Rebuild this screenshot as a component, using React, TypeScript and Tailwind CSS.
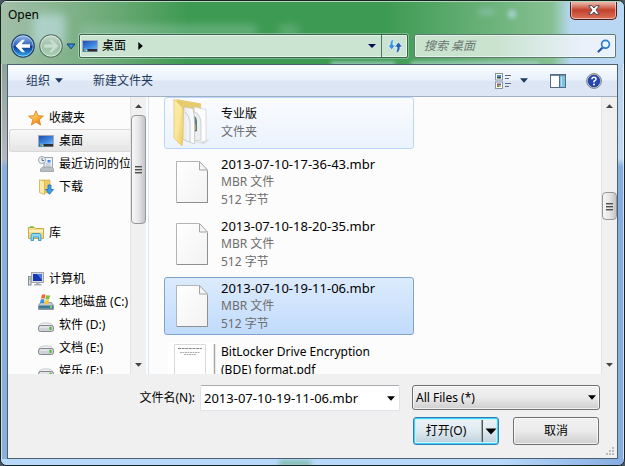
import type { ReactNode } from "react";

type IconProps = { className?: string };

function DesktopIcon() {
  return (
    <svg width="16" height="16" viewBox="0 0 16 16" className="shrink-0" aria-hidden="true">
      <defs>
        <linearGradient id="desk" x1="0" y1="0" x2="1" y2="1">
          <stop offset="0" stopColor="#1c4fae" />
          <stop offset="0.6" stopColor="#3f86e0" />
          <stop offset="1" stopColor="#6fb0f2" />
        </linearGradient>
      </defs>
      <rect x="0.5" y="2.5" width="15" height="11" fill="#c9ced6" stroke="#a3abb8" />
      <rect x="1" y="3" width="14" height="8" fill="url(#desk)" />
      <rect x="1" y="11" width="14" height="2.500" fill="#2a2f38" />
      <circle cx="3.500" cy="12" r="2.200" fill="#3aa3e8" />
      <path d="M2.500 11h1.200v1.200H2.500z" fill="#f3903a" />
      <path d="M4 12h1.200v1.200H4z" fill="#ffe14d" />
    </svg>
  );
}

function StarIcon() {
  return (
    <svg width="16" height="16" viewBox="0 0 16 16" className="shrink-0" aria-hidden="true">
      <defs>
        <linearGradient id="star" x1="0" y1="0" x2="0.600" y2="1">
          <stop offset="0" stopColor="#fff0a0" />
          <stop offset="0.500" stopColor="#fdc14a" />
          <stop offset="1" stopColor="#f07a1a" />
        </linearGradient>
      </defs>
      <path d="M8 .8l2 5 5.400.3-4.200 3.500 1.400 5.400L8 12l-4.600 3 1.400-5.400L.6 6.100 6 5.800z" fill="url(#star)" stroke="#e08a28" strokeLinejoin="round" />
    </svg>
  );
}

function RecentIcon() {
  return (
    <svg width="16" height="16" viewBox="0 0 16 16" className="shrink-0" aria-hidden="true">
      <path d="M6 1.500h8.500v10H6z" fill="#eef1f5" stroke="#9aa2ab" />
      <path d="M2.500 13l2-2h9l2 2v2.500h-13z" fill="#b9bec4" stroke="#979da5" strokeWidth=".8" />
      <path d="M7.500 8h5M7.500 10h5" stroke="#a9b6c4" />
      <rect x="9.500" y="4" width="3" height="2.500" fill="#3d8be0" />
      <circle cx="4" cy="4" r="3.500" fill="#eef3f7" stroke="#98a4b0" />
      <path d="M4 2v2.500h2" fill="none" stroke="#5a6d80" />
    </svg>
  );
}

function DownloadIcon() {
  return (
    <svg width="16" height="16" viewBox="0 0 16 16" className="shrink-0" aria-hidden="true">
      <path d="M4 1h8v13H4z" fill="#ecca66" stroke="#caa53d" strokeWidth=".6" />
      <path d="M1.500.8l5 1.200v13.500l-5-2z" fill="#fbe9a4" stroke="#d2b04f" strokeWidth=".8" />
      <path d="M10 6h3v4.500h2.500L11.500 15.300 7.500 10.500H10z" fill="#3a9eea" stroke="#1b6fc0" strokeWidth=".8" />
    </svg>
  );
}

function LibraryIcon() {
  return (
    <svg width="16" height="16" viewBox="0 0 16 16" className="shrink-0" aria-hidden="true">
      <path d="M.5 13.500V2.500h6l1.500 1h7.500v10z" fill="#f7dd85" stroke="#c9a94b" />
      <path d="M1 5h14v2H1z" fill="#fdf0b8" />
      <path d="M2 2h3.500" stroke="#5fc33c" strokeWidth="1.500" />
      <path d="M3 15.500v-5Q3 8.500 5 8.500h6q2 0 2 2v5h-2.500v-3.500h-5v3.500z" fill="#8fd6f2" stroke="#3b9cc8" />
    </svg>
  );
}

function ComputerIcon() {
  return (
    <svg width="16" height="16" viewBox="0 0 16 16" className="shrink-0" aria-hidden="true">
      <rect x=".5" y="5.500" width="2.500" height="8.500" fill="#d6dbe0" stroke="#868e97" />
      <path d="M1 8h1.500" stroke="#4fbf3a" />
      <rect x="3.500" y="1.500" width="12" height="10" fill="#d7dade" stroke="#9fa6ae" />
      <rect x="5" y="3" width="9" height="7" fill="#1636b4" />
      <path d="M9 3h5v6z" fill="#4a78e4" />
      <path d="M8 11.500h3.500v1.500h2v1.500h-7.500V13h2z" fill="#aab0b7" />
    </svg>
  );
}

function SystemDriveIcon() {
  return (
    <svg width="16" height="16" viewBox="0 0 16 16" className="shrink-0" aria-hidden="true">
      <path d="M2.500 8.500h11l2 3v4H.5v-4z" fill="#c3cad0" stroke="#7d8790" strokeWidth=".8" />
      <rect x="1" y="11.500" width="14" height="3.200" fill="#3f7890" />
      <rect x="12" y="12" width="2" height="2" fill="#5fe044" />
      <path d="M4 .8q2-1 3.500 0L6.700 4.800q-2-1-3.800 0z" fill="#ee6630" />
      <path d="M8.200 1q2 1 4 0l-.9 4q-2 1-3.900 0z" fill="#7cc242" />
      <path d="M2.700 5.500q2-1 3.800 0L5.700 9.500q-2-1-3.800 0z" fill="#3b92e0" />
      <path d="M7.200 5.700q2 1 3.900 0l-.9 4q-2 1-3.800 0z" fill="#fcc62e" />
    </svg>
  );
}

function DriveIcon() {
  return (
    <svg width="16" height="16" viewBox="0 0 16 16" className="shrink-0" aria-hidden="true">
      <path d="M3 6.500q5-1.500 10 0l2 2.500H1z" fill="#f1f2f3" stroke="#bcbfc3" strokeWidth=".8" />
      <rect x=".5" y="8.500" width="15" height="6" rx="2" fill="#cfd2d7" stroke="#82868c" />
      <path d="M2 10h9" stroke="#f4f5f6" />
      <rect x="11.500" y="10" width="2" height="3" fill="#43c22c" />
    </svg>
  );
}

function FolderIcon() {
  return (
    <svg width="38" height="50" viewBox="0 0 38 50" aria-hidden="true">
      <defs>
        <linearGradient id="flap" x1="0" y1="0" x2="1" y2="1">
          <stop offset="0" stopColor="#fbedab" />
          <stop offset="0.5" stopColor="#fae79a" />
          <stop offset="1" stopColor="#ecc95c" />
        </linearGradient>
        <linearGradient id="sheet" x1="0" y1="0" x2="1" y2="0">
          <stop offset="0" stopColor="#e4e7ea" />
          <stop offset="1" stopColor="#ffffff" />
        </linearGradient>
      </defs>
      <path d="M26 45l11-4-6 5z" fill="#00000018" />
      <path d="M3 1l25 4.500V12L8 16z" fill="#e6cc6c" />
      <path d="M21 9l12 2.500V43l-9 1.500z" fill="#fdfdfd" stroke="#d3d3d3" strokeWidth=".8" />
      <path d="M20 13l5 3q3 4 3 10v16l-6 1z" fill="#eceeef" stroke="#c4c8cb" strokeWidth=".8" />
      <path d="M21 18q3 1 3 6v9l-3 1z" fill="#5b7d85" />
      <path d="M21 25l2 2v5l-2 1z" fill="#b8995a" />
      <path d="M11 9l9 1.500q1.500 8 1.500 16V46L9 41z" fill="url(#sheet)" stroke="#c4c4c4" strokeWidth=".8" />
      <path d="M12 14q4 3 5 10v20" fill="none" stroke="#c9ced4" />
      <path d="M1 1l8 8q1 1 1 3v27l-1 9-8-8z" fill="url(#flap)" stroke="#e2c664" strokeWidth=".8" />
    </svg>
  );
}

function PageIcon() {
  return (
    <svg width="34" height="44" viewBox="0 0 34 44" aria-hidden="true">
      <defs>
        <linearGradient id="page" x1="0" y1="0" x2="1" y2="1">
          <stop offset="0" stopColor="#ffffff" />
          <stop offset="1" stopColor="#f2f2f2" />
        </linearGradient>
      </defs>
      <path d="M1.500 1.500h22l9 9v32h-31z" fill="url(#page)" stroke="#b4b4b4" />
      <path d="M2 42.500h30.500V11" fill="none" stroke="#8f8f8f" />
      <path d="M24.500 1.500v8.500h8z" fill="#f4f4f4" stroke="#a4a4a4" />
    </svg>
  );
}

function PdfIcon() {
  return (
    <svg width="48" height="50" viewBox="0 0 48 50" className="shrink-0" aria-hidden="true">
      <path d="M0 0h48v50H0z" fill="#fff" />
      <path d="M6.500 50V1.500h31V50" fill="#fff" stroke="#dadada" />
      <path d="M46.500 1v49" stroke="#a6a6a6" strokeWidth="1.500" />
      <path d="M10 5.500h24" stroke="#8a8a8a" strokeDasharray="3 .6" />
      <path d="M12 9.500h20M16 11.500h12" stroke="#b0b0b0" strokeDasharray="2 .5" />
    </svg>
  );
}

function Triangle({ className = "" }: IconProps) {
  return (
    <svg width="8" height="5" viewBox="0 0 8 5" className={className} aria-hidden="true">
      <path d="M0 .3h8L4 4.700z" fill="currentColor" />
    </svg>
  );
}

function ScrollBar({ top, thumb }: { top: string; thumb: string }) {
  return (
    <div className="flex w-4 shrink-0 flex-col items-center border-l border-[#e3e3e3] bg-[#f0f0f0] text-[#444]">
      <button aria-label="Scroll up" className="flex h-[18px] w-full items-center justify-center">
        <svg width="7" height="4" viewBox="0 0 7 4" aria-hidden="true">
          <path d="M0 4h7L3.500.3z" fill="currentColor" />
        </svg>
      </button>
      <div className={top} />
      <div className={`flex w-[15px] flex-col items-center justify-center rounded-sm border border-[#979797] bg-linear-to-r from-[#f7f7f7] via-[#e6e6e8] to-[#c3c4c8] ${thumb}`}>
        <svg width="7" height="9" viewBox="0 0 7 9" aria-hidden="true">
          <path d="M0 1.500h7M0 4.500h7M0 7.500h7" stroke="#505050" />
          <path d="M0 2.500h7M0 5.500h7M0 8.500h7" stroke="#a8a8a8" />
        </svg>
      </div>
      <div className="flex-1" />
      <button aria-label="Scroll down" className="flex h-[18px] w-full shrink-0 items-center justify-center">
        <svg width="7" height="4" viewBox="0 0 7 4" aria-hidden="true">
          <path d="M0 0h7L3.500 3.700z" fill="currentColor" />
        </svg>
      </button>
    </div>
  );
}

function NavGroup({ icon, label, children }: { icon: ReactNode; label: string; children?: ReactNode }) {
  return (
    <li className="mb-[23px]">
      <button className="flex h-[23px] w-full items-center gap-[5px] pl-5 whitespace-nowrap">
        {icon}
        {label}
      </button>
      <ul>{children}</ul>
    </li>
  );
}

function NavItem({ icon, label, selected }: { icon: ReactNode; label: string; selected?: boolean }) {
  return (
    <li className="pl-px">
      <button
        className={`flex h-[23px] w-full items-center gap-[5px] rounded-l-[3px] border-y border-l pl-[28px] whitespace-nowrap ${
          selected ? "border-[#d9d9d9] bg-linear-to-b from-[#f8f8f8] to-[#e5e5e5]" : "border-transparent"
        }`}
      >
        {icon}
        {label}
      </button>
    </li>
  );
}

type FileItemProps = { icon: ReactNode; name: string; lines?: string[]; look: string; nameSize?: string };

function FileItem({ icon, name, lines = [], look, nameSize = "text-[13px]" }: FileItemProps) {
  return (
    <li>
      <button className={`flex w-[250px] items-center rounded-[3px] border text-left ${look}`}>
        <span className="flex w-[56px] shrink-0 justify-center pr-0.5">{icon}</span>
        <span className="flex flex-col">
          <span className={`leading-[18px] text-black ${nameSize}`}>{name}</span>
          {lines.map((line) => (
            <span key={line} className="leading-[18px] text-[#6d6d6d]">
              {line}
            </span>
          ))}
        </span>
      </button>
    </li>
  );
}

const mbrLines = ["MBR 文件", "512 字节"];

export default function App() {
  return (
    <div className="h-screen min-h-[300px] bg-[#4a5560] font-['Noto_Sans','Noto_Sans_CJK_SC',sans-serif] text-[12px] leading-[18px] text-black">
      <div className="flex h-full flex-col overflow-hidden rounded-[7px] border border-[#17231f] bg-[#b9d9fb]">
        <header className="relative isolate shrink-0 overflow-hidden border-t border-white/60 bg-linear-to-r from-[#a3bfa9] via-[#3d9a52] via-30% to-[#3d9a52]">
          <div className="absolute inset-y-0 right-0 -z-10 w-[240px] bg-linear-to-r from-[#3d9a5200] via-[#86c091] via-70% to-[#b9d7f3] to-78%" />
          <div className="absolute top-3 left-8 -z-10 h-8 w-8 rounded bg-[#b5d8d5] opacity-80 blur-[5px]" />
          <div className="absolute top-6 left-20 -z-10 h-2 w-44 bg-[#9fcdb9] opacity-50 blur-[4px]" />
          <div className="absolute top-6 left-[278px] -z-10 h-2 w-5 bg-[#9fcdb9] opacity-40 blur-[4px]" />
          <div className="absolute top-2 right-[108px] -z-10 h-2 w-2 bg-[#b5d9e6] opacity-70 blur-[2px]" />
          <div className="absolute top-2 right-[130px] -z-10 h-1 w-4 bg-[#b5d9e6] opacity-50 blur-[3px]" />
          <div className="absolute -bottom-0.5 left-[330px] -z-10 h-1 w-16 bg-[#a9d3c9] blur-[2px]" />
          <div className="absolute -bottom-0.5 left-[410px] -z-10 h-1 w-32 bg-[#a9d3c9] blur-[2px]" />

          <div className="flex h-8 items-start justify-between px-[7px]">
            <h1 className="pt-1 text-[12px] leading-[18px]">Open</h1>
            <button
              aria-label="Close"
              className="-mt-px flex h-[19px] w-[47px] items-center justify-center rounded-b-[5px] border border-t-0 border-[#4b1a1a] bg-linear-to-b from-[#e9b0a2] from-10% via-[#c3402c] via-50% to-[#dc7058] shadow-[inset_0_0_0_1px_#ffffff80]"
            >
              <svg width="12" height="10" viewBox="0 0 12 10" aria-hidden="true">
                <path d="M.7.7h3.300l2 2.300 2-2.300h3.300L8 5l3.300 4.300H8L6 7 4 9.300H.7L4 5z" fill="#fff" stroke="#4a4a58" />
              </svg>
            </button>
          </div>

          <div className="flex h-[30px] items-start pr-2 pl-[10px]">
            <button aria-label="Back" className="mr-1 shrink-0">
              <svg width="24" height="24" viewBox="0 0 24 24">
                <defs>
                  <linearGradient id="back" x1="0" y1="0" x2="0" y2="1">
                    <stop offset="0" stopColor="#9cbfe8" />
                    <stop offset=".48" stopColor="#2c62b8" />
                    <stop offset=".52" stopColor="#0b3592" />
                    <stop offset="1" stopColor="#35b5f5" />
                  </linearGradient>
                </defs>
                <circle cx="12" cy="12" r="11.200" fill="url(#back)" stroke="#1c3d66" strokeWidth="1.200" />
                <circle cx="12" cy="12" r="10.200" fill="none" stroke="#d7ebff" strokeOpacity=".6" />
                <path d="M4.500 12L11 5.700h3L10.500 10.300H19v3.400h-8.500L14 18.300h-3z" fill="#fff" />
              </svg>
            </button>
            <button aria-label="Forward" className="mr-[3px] shrink-0">
              <svg width="24" height="24" viewBox="0 0 24 24">
                <defs>
                  <linearGradient id="fwd" x1="0" y1="0" x2="0" y2="1">
                    <stop offset="0" stopColor="#c3d9cb" />
                    <stop offset=".5" stopColor="#9dbfa8" />
                    <stop offset="1" stopColor="#a9d3b3" />
                  </linearGradient>
                </defs>
                <circle cx="12" cy="12" r="11.200" fill="url(#fwd)" stroke="#567463" strokeWidth="1.200" />
                <circle cx="12" cy="12" r="10.200" fill="none" stroke="#fff" strokeOpacity=".6" />
                <path d="M19.500 12L13 5.700h-3l3.500 4.600H5v3.400h8.500L10 18.300h3z" fill="#c9dfd0" stroke="#b3cdbb" strokeWidth=".6" />
              </svg>
            </button>
            <button aria-label="Recent pages" className="mr-[3px] flex h-6 w-[10px] shrink-0 items-center">
              <svg width="10" height="7" viewBox="0 0 10 7">
                <path d="M1 1h8L5 5.800z" fill="#3f8ed8" stroke="#143d74" strokeLinejoin="round" />
              </svg>
            </button>

            <div className="mr-[6px] flex h-6 min-w-0 flex-1 items-center rounded-xs border border-[#35654a] bg-[#cbe4d1] shadow-[inset_0_0_0_1px_#e6f4ea,0_0_0_1px_#ffffff50]">
              <button className="flex h-full items-center gap-1 pl-[2px]">
                <DesktopIcon />
                桌面
              </button>
              <button aria-label="Subfolders" className="flex h-full items-center px-3">
                <svg width="5" height="8" viewBox="0 0 5 8">
                  <path d="M.3 0v8L4.800 4z" fill="#000" />
                </svg>
              </button>
              <button aria-label="Previous locations" className="ml-auto flex h-full w-[18px] items-center justify-center text-[#0a0a5a]">
                <svg width="8" height="4" viewBox="0 0 8 4">
                  <path d="M0 0h8L4 4z" fill="currentColor" />
                </svg>
              </button>
              <button aria-label="Refresh" className="flex h-full w-[26px] items-center justify-center border-l border-[#4d7a5f]">
                <svg width="16" height="16" viewBox="0 0 16 16">
                  <path d="M7 1Q3 1.500 3 6v1H.8L4.700 12 8.500 7H6V5Q6 3 7 1z" fill="#3a93e2" stroke="#eef8ff" strokeWidth=".7" />
                  <path d="M8.500 15q4.500-.5 4.500-5V9h2.500L11.500 4 7.500 9H10v2q0 2-1.500 4z" fill="#1f62b4" stroke="#eef8ff" strokeWidth=".7" />
                </svg>
              </button>
            </div>

            <label className="flex h-6 w-[202px] shrink-0 items-center rounded-xs border border-[#5c7c70] bg-linear-to-r from-[#c9e3cf] from-40% to-[#eaf1fb] to-85% pr-1 pl-[9px] shadow-[inset_0_0_0_1px_#ffffff80]">
              <input type="search" aria-label="搜索 桌面" placeholder="搜索 桌面" className="min-w-0 flex-1 bg-transparent italic outline-none placeholder:text-[#6c766f]" />
              <svg width="14" height="14" viewBox="0 0 14 14" className="shrink-0" aria-hidden="true">
                <path d="M6 8.200L1.500 12.500" stroke="#2456a8" strokeWidth="2.200" strokeLinecap="round" />
                <circle cx="8.500" cy="5.300" r="3.900" fill="#e9f5ff" stroke="#2f7cc9" strokeWidth="1.700" />
              </svg>
            </label>
          </div>
        </header>

        <div className="flex min-h-0 flex-1">
          <div className="w-1.5 shrink-0 border-l border-white/60 bg-linear-to-b from-[#8fa398] via-[#b5b9c0] via-24% to-[#8ab0d8] to-26%" />
          <main className="flex min-w-0 flex-1 flex-col border border-[#4c5f72] bg-[#fcfcfc]">
            <div className="flex h-8 shrink-0 items-center border-b border-[#a0afc3] bg-linear-to-b from-[#fafcff] via-[#e9f1fb] via-48% to-[#dce6f4] to-52% pr-[15px] pl-[18px] text-[#1e395b]">
              <button className="flex items-center gap-[5px]">
                组织
                <Triangle />
              </button>
              <button className="ml-[30px]">新建文件夹</button>
              <button aria-label="Change view" className="ml-auto">
                <svg width="17" height="16" viewBox="0 0 17 16">
                  <rect x=".5" y=".5" width="7" height="6.500" fill="#fff" stroke="#8593a6" />
                  <rect x="2" y="2" width="4" height="2" fill="#4c90d0" />
                  <rect x="2" y="4" width="4" height="1.500" fill="#274f3c" />
                  <rect x=".5" y="9" width="7" height="6.500" fill="#fff" stroke="#8593a6" />
                  <rect x="2" y="10.500" width="2" height="2" fill="#d33b28" />
                  <rect x="4" y="10.500" width="2" height="2" fill="#3c6fd0" />
                  <rect x="2" y="12.500" width="2" height="1.500" fill="#3aa33c" />
                  <rect x="4" y="12.500" width="2" height="1.500" fill="#e8b62c" />
                  <path d="M10 2.500h6M10 5.500h4M10 10.500h6M10 13.500h4" stroke="#5b6b80" />
                </svg>
              </button>
              <button aria-label="More view options" className="ml-2">
                <Triangle />
              </button>
              <button aria-label="Preview pane" className="ml-[22px]">
                <svg width="16" height="14" viewBox="0 0 16 14">
                  <rect x=".5" y=".5" width="15" height="13" fill="#fff" stroke="#566a86" />
                  <path d="M1 1.500h14" stroke="#6f86a5" />
                  <rect x="10" y="2" width="5" height="11" fill="#7cc3e0" />
                  <path d="M9.500 1v12" stroke="#566a86" />
                  <path d="M11.500 3v9" stroke="#b9e4f2" />
                </svg>
              </button>
              <button aria-label="Help" className="ml-5">
                <svg width="16" height="16" viewBox="0 0 16 16">
                  <circle cx="8" cy="8" r="7.400" fill="#d3d6dc" stroke="#7c828c" />
                  <circle cx="8" cy="8" r="5.900" fill="#2547b5" stroke="#182f80" strokeWidth=".7" />
                  <path d="M5.900 6.300q.1-2 2.100-2t2.100 1.800Q10.100 7.200 8 8.300v1.200" fill="none" stroke="#fff" strokeWidth="1.500" />
                  <circle cx="8" cy="11.500" r="1" fill="#fff" />
                </svg>
              </button>
            </div>

            <div className="flex min-h-0 flex-1 overflow-hidden">
              <nav className="flex w-[141px] shrink-0 border-r border-[#d6e5f5] pr-0.5">
                <ul className="min-w-0 flex-1 overflow-hidden pt-[9px]">
                  <NavGroup icon={<StarIcon />} label="收藏夹">
                    <NavItem icon={<DesktopIcon />} label="桌面" selected />
                    <NavItem icon={<RecentIcon />} label="最近访问的位" />
                    <NavItem icon={<DownloadIcon />} label="下载" />
                  </NavGroup>
                  <NavGroup icon={<LibraryIcon />} label="库" />
                  <NavGroup icon={<ComputerIcon />} label="计算机">
                    <NavItem icon={<SystemDriveIcon />} label="本地磁盘 (C:)" />
                    <NavItem icon={<DriveIcon />} label="软件 (D:)" />
                    <NavItem icon={<DriveIcon />} label="文档 (E:)" />
                    <NavItem icon={<DriveIcon />} label="娱乐 (F:)" />
                  </NavGroup>
                </ul>
                <ScrollBar top="h-0" thumb="h-[109px]" />
              </nav>

              <ul className="flex min-w-0 flex-1 flex-col gap-1 overflow-hidden pl-[15px]">
                <FileItem icon={<FolderIcon />} name="专业版" nameSize="text-[12px]" lines={["文件夹"]} look="h-[52px] border-[#b9d7fc] bg-linear-to-b from-[#fafbfd] to-[#ebf3fd]" />
                <FileItem icon={<PageIcon />} name="2013-07-10-17-36-43.mbr" lines={mbrLines} look="h-[58px] border-transparent" />
                <FileItem icon={<PageIcon />} name="2013-07-10-18-20-35.mbr" lines={mbrLines} look="h-[58px] border-transparent" />
                <FileItem icon={<PageIcon />} name="2013-07-10-19-11-06.mbr" lines={mbrLines} look="h-[58px] border-[#7da2ce] bg-linear-to-b from-[#dcebfc] to-[#c1dbfc]" />
                <FileItem icon={<PdfIcon />} name="BitLocker Drive Encryption (BDE) format.pdf" nameSize="w-[164px]" look="border-transparent pt-[3px] items-start" />
              </ul>
              <ScrollBar top="h-[77px]" thumb="h-7" />
            </div>

            <form className="relative flex shrink-0 flex-col gap-1.5 bg-[#f0f0f0] pt-[11px] pr-[17px] pb-[13px]" onSubmit={(e) => e.preventDefault()}>
              <div className="flex h-[26px] items-center">
                <label htmlFor="filename" className="w-[187px] shrink-0 text-right">
                  文件名(N):
                </label>
                <div className="mr-3 ml-[5px] flex h-full min-w-0 flex-1 items-center rounded-xs border border-[#e2e3ea] border-t-[#abadb3] bg-white pr-1">
                  <input id="filename" defaultValue="2013-07-10-19-11-06.mbr" className="min-w-0 flex-1 bg-transparent pl-[3px] text-[13px] outline-none" />
                  <button type="button" aria-label="Recent file names">
                    <Triangle />
                  </button>
                </div>
                <div className="relative h-[25px] w-[188px] shrink-0 self-start">
                  <select aria-label="File type" className="h-full w-full appearance-none rounded-[3px] border border-[#707070] bg-linear-to-b from-[#f2f2f2] via-[#ebebeb] via-49% to-[#cfcfcf] pl-[3px] shadow-[inset_0_0_0_1px_#ffffffb0] outline-none">
                    <option>All Files (*)</option>
                  </select>
                  <Triangle className="pointer-events-none absolute top-[10px] right-1" />
                </div>
              </div>
              <div className="flex h-7 justify-end gap-[14px] pr-px">
                <div className="flex w-[86px] rounded-[3px] border border-[#2f80b8] bg-linear-to-b from-[#edf4f8] via-[#dfeaf0] via-49% to-[#bccfdb] shadow-[inset_0_0_0_1px_#3fd0f5,inset_0_0_0_2px_#c8f1fb]">
                  <button type="submit" className="min-w-0 flex-1 pr-1">
                    打开(O)
                  </button>
                  <button type="button" aria-label="Open options" className="my-0.5 flex w-4 items-center justify-center border-l border-[#555] shadow-[-1px_0_0_#9aa]">
                    <svg width="12" height="7" viewBox="0 0 12 7">
                      <path d="M.5.5h11L6 6.500z" fill="#000" />
                    </svg>
                  </button>
                </div>
                <button type="button" className="w-[86px] rounded-[3px] border border-[#707070] bg-linear-to-b from-[#f2f2f2] via-[#ebebeb] via-49% to-[#cfcfcf] shadow-[inset_0_0_0_1px_#ffffffb0]">
                  取消
                </button>
              </div>
              <svg width="9" height="9" viewBox="0 0 9 9" className="absolute right-0.5 bottom-0.5" aria-hidden="true">
                <path d="M6 0h2v2H6zM3 3h2v2H3zM6 3h2v2H6zM0 6h2v2H0zM3 6h2v2H3zM6 6h2v2H6z" fill="#bcbcbc" />
              </svg>
            </form>
          </main>
          <div className="w-1.5 shrink-0 border-r border-white/60 bg-linear-to-b from-[#b9d3ee] via-[#c3d9f0] via-24% to-[#86ade0] to-26%" />
        </div>
        <div className="relative h-1.5 shrink-0 overflow-hidden bg-linear-to-r from-[#b9d9fb] from-80% to-[#86ade0]">
          <div className="absolute top-0.5 left-[278px] h-1 w-8 bg-[#6fb598] blur-[2px]" />
        </div>
      </div>
    </div>
  );
}
